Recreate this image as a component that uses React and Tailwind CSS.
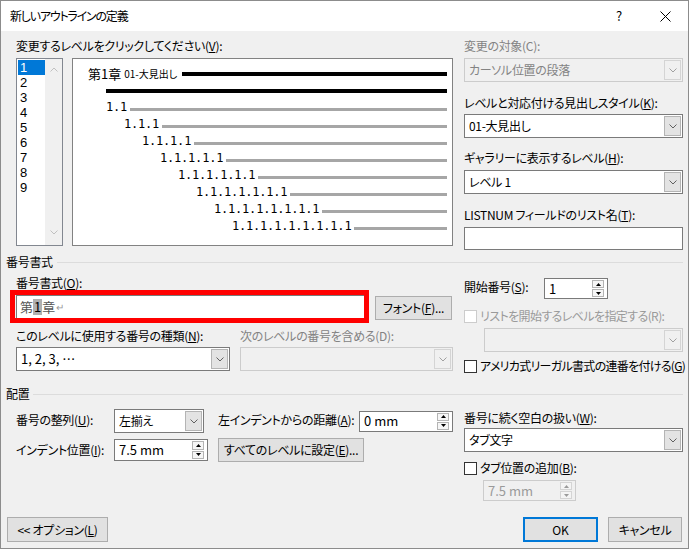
import React from "react";

const U = ({ children }) => <span className="underline">{children}</span>;

const Chevron = ({ color = "#606060" }) => (
  <svg width="8" height="5" viewBox="0 0 8 5">
    <path d="M0.5 0.5 L4 4 L7.5 0.5" fill="none" stroke={color} strokeWidth="1" />
  </svg>
);

const ChevronUp = ({ color = "#c0c0c0" }) => (
  <svg width="8" height="5" viewBox="0 0 8 5">
    <path d="M0.5 4.5 L4 1 L7.5 4.5" fill="none" stroke={color} strokeWidth="1" />
  </svg>
);

const Tri = ({ up, color = "#000" }) => (
  <svg width="5" height="3" viewBox="0 0 5 3">
    {up ? <path d="M0 3 L2.5 0 L5 3 Z" fill={color} /> : <path d="M0 0 L2.5 3 L5 0 Z" fill={color} />}
  </svg>
);

function Select({ value, disabled, className = "" }) {
  return (
    <div
      className={`flex border ${
        disabled ? "border-[#cccccc] bg-[#f0f0f0] text-[#838383]" : "border-[#7a7a7a] bg-white"
      } ${className}`}
    >
      <div className="flex-1 flex items-center pl-[4px] whitespace-nowrap overflow-hidden">{value}</div>
      <div
        className={`w-[17px] my-[1px] mr-[1px] flex items-center justify-center border ${
          disabled ? "border-[#d4d4d4] bg-[#f0f0f0]" : "border-[#b4b4b4] bg-[#e3e3e3]"
        }`}
      >
        <Chevron color={disabled ? "#a0a0a0" : "#606060"} />
      </div>
    </div>
  );
}

function Spin({ value, disabled, className = "" }) {
  return (
    <div
      className={`flex border ${
        disabled ? "border-[#cccccc] bg-[#f0f0f0] text-[#9a9a9a]" : "border-[#7a7a7a] bg-white"
      } ${className}`}
    >
      <div className="flex-1 flex items-center pl-[4px] text-[13px] tracking-normal whitespace-nowrap">{value}</div>
      <div className="w-[12px] flex flex-col py-[1px] mr-[3px] gap-[1px]">
        <div
          className={`flex-1 border ${
            disabled ? "border-[#d4d4d4] bg-[#f4f4f4]" : "border-[#b4b4b4] bg-[#f6f6f6]"
          } flex items-center justify-center`}
        >
          <Tri up color={disabled ? "#9a9a9a" : "#000"} />
        </div>
        <div
          className={`flex-1 border ${
            disabled ? "border-[#d4d4d4] bg-[#f4f4f4]" : "border-[#b4b4b4] bg-[#f6f6f6]"
          } flex items-center justify-center`}
        >
          <Tri color={disabled ? "#9a9a9a" : "#000"} />
        </div>
      </div>
    </div>
  );
}

const Check = ({ disabled }) => (
  <div className={`w-[13px] h-[13px] border ${disabled ? "border-[#cccccc]" : "border-[#333333]"} bg-white shrink-0`} />
);

function Btn({ children, className = "" }) {
  return (
    <div className={`flex items-center justify-center border border-[#adadad] bg-[#e1e1e1] whitespace-nowrap ${className}`}>
      {children}
    </div>
  );
}

const Label = ({ children, className = "" }) => (
  <div className={`h-[16px] leading-[16px] whitespace-nowrap ${className}`}>{children}</div>
);

function GroupHead({ children }) {
  return (
    <div className="flex items-center h-[16px]">
      <span className="whitespace-nowrap">{children}</span>
      <div className="flex-1 border-t border-[#dcdcdc] ml-[4px] mt-[1px]" />
    </div>
  );
}

const levelRows = [
  { t: "1.1", pl: "pl-[33px]" },
  { t: "1.1.1", pl: "pl-[51px]" },
  { t: "1.1.1.1", pl: "pl-[69px]" },
  { t: "1.1.1.1.1", pl: "pl-[87px]" },
  { t: "1.1.1.1.1.1", pl: "pl-[105px]" },
  { t: "1.1.1.1.1.1.1", pl: "pl-[123px]" },
  { t: "1.1.1.1.1.1.1.1", pl: "pl-[141px]" },
  { t: "1.1.1.1.1.1.1.1.1", pl: "pl-[159px]" },
];

export default function App() {
  return (
    <div className="w-[689px] h-[551px] bg-white font-['Noto_Sans_CJK_JP',sans-serif] text-[12px] leading-[16px] tracking-[-0.3px] text-black [font-feature-settings:'palt']">
      <div className="h-[549px] border border-[#8c8c8c] flex flex-col">
        {/* Title bar */}
        <div className="h-[30px] bg-white flex items-center pl-[9px]">
          <div className="flex-1 whitespace-nowrap tracking-[-1.2px]">新しいアウトラインの定義</div>
          <div className="w-[46px] flex justify-center text-[13px]">?</div>
          <div className="w-[46px] flex justify-center">
            <svg width="11" height="11" viewBox="0 0 11 11">
              <path d="M0.5 0.5 L10.5 10.5 M10.5 0.5 L0.5 10.5" stroke="#000" strokeWidth="1" />
            </svg>
          </div>
        </div>

        {/* Body */}
        <div className="flex-1 bg-[#f0f0f0] pl-[5px] pr-[5px] flex flex-col">
          {/* Top section */}
          <div className="flex items-start pl-[10px] pt-[7px]">
            <div className="w-[437px] flex flex-col">
              <Label>
                変更するレベルをクリックしてください(<U>V</U>):
              </Label>
              <div className="mt-[4px] flex gap-[9px] h-[188px]">
                <div className="w-[47px] h-[188px] border border-[#828790] bg-white flex">
                  <div className="flex-1 pt-[1px] pl-[1px] text-[13px] font-['Liberation_Sans',sans-serif] tracking-normal">
                    {["1", "2", "3", "4", "5", "6", "7", "8", "9"].map((n) => (
                      <div
                        key={n}
                        className={`h-[15px] leading-[15px] pl-[2px] ${n === "1" ? "bg-[#0078d7] text-white" : ""}`}
                      >
                        {n}
                      </div>
                    ))}
                  </div>
                  <div className="w-[17px] bg-[#f0f0f0] flex flex-col justify-between items-center pt-[8px] pb-[10px]">
                    <ChevronUp />
                    <Chevron color="#c0c0c0" />
                  </div>
                </div>
                <div className="w-[381px] h-[188px] border border-[#828282] bg-white pt-[6px] pr-[5px] tracking-normal">
                  <div className="h-[17px] flex items-center pl-[15px]">
                    <span className="text-[13px] leading-[17px] whitespace-nowrap">第1章</span>
                    <span className="text-[10px] leading-[17px] ml-[3px] whitespace-nowrap">01-大見出し</span>
                    <div className="flex-1 h-[4px] bg-black ml-[5px] mt-[1px]" />
                  </div>
                  <div className="h-[17px] flex items-center pl-[33px]">
                    <div className="flex-1 h-[4px] bg-black" />
                  </div>
                  {levelRows.map((r) => (
                    <div key={r.t} className={`h-[17px] flex items-center ${r.pl}`}>
                      <span className="font-['DejaVu_Sans_Mono',monospace] text-[12px] leading-[17px] tracking-[-0.2px] whitespace-nowrap">
                        {r.t}
                      </span>
                      <div className="flex-1 h-[3px] bg-[#a6a6a6] ml-[3px] mt-[3px]" />
                    </div>
                  ))}
                </div>
              </div>
            </div>
            <div className="w-[219px] ml-[11px] flex flex-col">
              <Label className="text-[#838383]">変更の対象(C):</Label>
              <Select disabled value="カーソル位置の段落" className="mt-[4px] h-[24px]" />
              <Label className="mt-[13px]">
                レベルと対応付ける見出しスタイル(<U>K</U>):
              </Label>
              <Select value="01-大見出し" className="mt-[3px] h-[24px]" />
              <Label className="mt-[12px]">
                ギャラリーに表示するレベル(<U>H</U>):
              </Label>
              <Select value="レベル 1" className="mt-[4px] h-[24px]" />
              <Label className="mt-[13px]">
                LISTNUM フィールドのリスト名(<U>T</U>):
              </Label>
              <div className="mt-[4px] h-[23px] border border-[#7a7a7a] bg-white" />
            </div>
          </div>

          {/* 番号書式 */}
          <div className="mt-[4px]">
            <GroupHead>番号書式</GroupHead>
          </div>
          <div className="flex items-start pl-[10px]">
            <div className="w-[437px] flex flex-col">
              <Label className="mt-[5px]">
                番号書式(<U>O</U>):
              </Label>
              <div className="mt-[4px] flex items-start">
                <div className="relative w-[350px] h-[24px] border border-[#7a7a7a] bg-white flex items-center pl-[3px] text-[13px] tracking-normal">
                  <span className="text-[#555555]">第</span>
                  <span className="bg-[#b0b0b0] text-black px-[1px]">1</span>
                  <span className="text-[#555555]">章</span>
                  <span className="text-[#9a9a9a] text-[10px] ml-[1px]">↵</span>
                  <div className="absolute -left-[7px] -top-[6px] -right-[4px] -bottom-[5px] border-[5px] border-[#ff0000]" />
                </div>
                <Btn className="ml-[9px] mt-[1px] w-[77px] h-[24px]">
                  フォント(<U>F</U>)...
                </Btn>
              </div>
              <div className="mt-[8px] flex">
                <Label className="w-[224px]">
                  このレベルに使用する番号の種類(<U>N</U>):
                </Label>
                <Label className="text-[#838383]">次のレベルの番号を含める(D):</Label>
              </div>
              <div className="mt-[3px] flex">
                <Select
                  value={<span className="tracking-normal text-[13px]">1, 2, 3, ⋯</span>}
                  className="w-[214px] h-[24px]"
                />
                <Select disabled value="" className="ml-[10px] w-[213px] h-[24px]" />
              </div>
            </div>
            <div className="w-[219px] ml-[11px] flex flex-col">
              <div className="mt-[8px] flex items-start">
                <Label className="w-[80px] mt-[1px]">
                  開始番号(<U>S</U>):
                </Label>
                <Spin value="1" className="w-[64px] h-[21px]" />
              </div>
              <div className="mt-[9px] flex items-center h-[16px] text-[#9a9a9a]">
                <Check disabled />
                <span className="ml-[3px] whitespace-nowrap tracking-[-0.6px]">リストを開始するレベルを指定する(R):</span>
              </div>
              <Select disabled value="" className="ml-[20px] mt-[4px] h-[24px]" />
              <div className="mt-[6px] flex items-center h-[16px]">
                <Check />
                <span className="ml-[3px] whitespace-nowrap tracking-[-0.7px]">
                  アメリカ式リーガル書式の連番を付ける(<U>G</U>)
                </span>
              </div>
            </div>
          </div>

          {/* 配置 */}
          <div className="mt-[12px]">
            <GroupHead>配置</GroupHead>
          </div>
          <div className="flex items-start pl-[10px]">
            <div className="w-[437px] flex flex-col">
              <div className="mt-[7px] flex items-center h-[24px]">
                <Label className="w-[98px] -mt-[2px]">
                  番号の整列(<U>U</U>):
                </Label>
                <Select value="左揃え" className="w-[90px] h-[24px]" />
                <Label className="ml-[14px] w-[141px] -mt-[2px]">
                  左インデントからの距離(<U>A</U>):
                </Label>
                <Spin value="0 mm" className="w-[94px] h-[21px]" />
              </div>
              <div className="mt-[5px] flex items-center h-[24px]">
                <Label className="w-[98px]">
                  インデント位置(<U>I</U>):
                </Label>
                <Spin value="7.5 mm" className="w-[94px] h-[22px]" />
                <Btn className="ml-[10px] w-[146px] h-[24px]">
                  すべてのレベルに設定(<U>E</U>)...
                </Btn>
              </div>
            </div>
            <div className="w-[219px] ml-[11px] flex flex-col">
              <Label className="mt-[8px]">
                番号に続く空白の扱い(<U>W</U>):
              </Label>
              <Select value="タブ文字" className="mt-[2px] h-[24px]" />
              <div className="mt-[8px] flex items-center h-[16px]">
                <Check />
                <span className="ml-[3px] whitespace-nowrap">
                  タブ位置の追加(<U>B</U>):
                </span>
              </div>
              <Spin disabled value="7.5 mm" className="ml-[19px] mt-[4px] w-[93px] h-[21px]" />
            </div>
          </div>

          {/* Buttons */}
          <div className="mt-[16px] flex items-center">
            <Btn className="ml-[1px] w-[101px] h-[25px]">
              &lt;&lt; オプション(<U>L</U>)
            </Btn>
            <div className="flex-1" />
            <div className="w-[75px] h-[25px] border-2 border-[#0078d7] bg-[#e1e1e1] flex items-center justify-center tracking-normal">
              OK
            </div>
            <Btn className="ml-[10px] mr-[1px] w-[74px] h-[25px]">キャンセル</Btn>
          </div>
        </div>
      </div>
    </div>
  );
}
